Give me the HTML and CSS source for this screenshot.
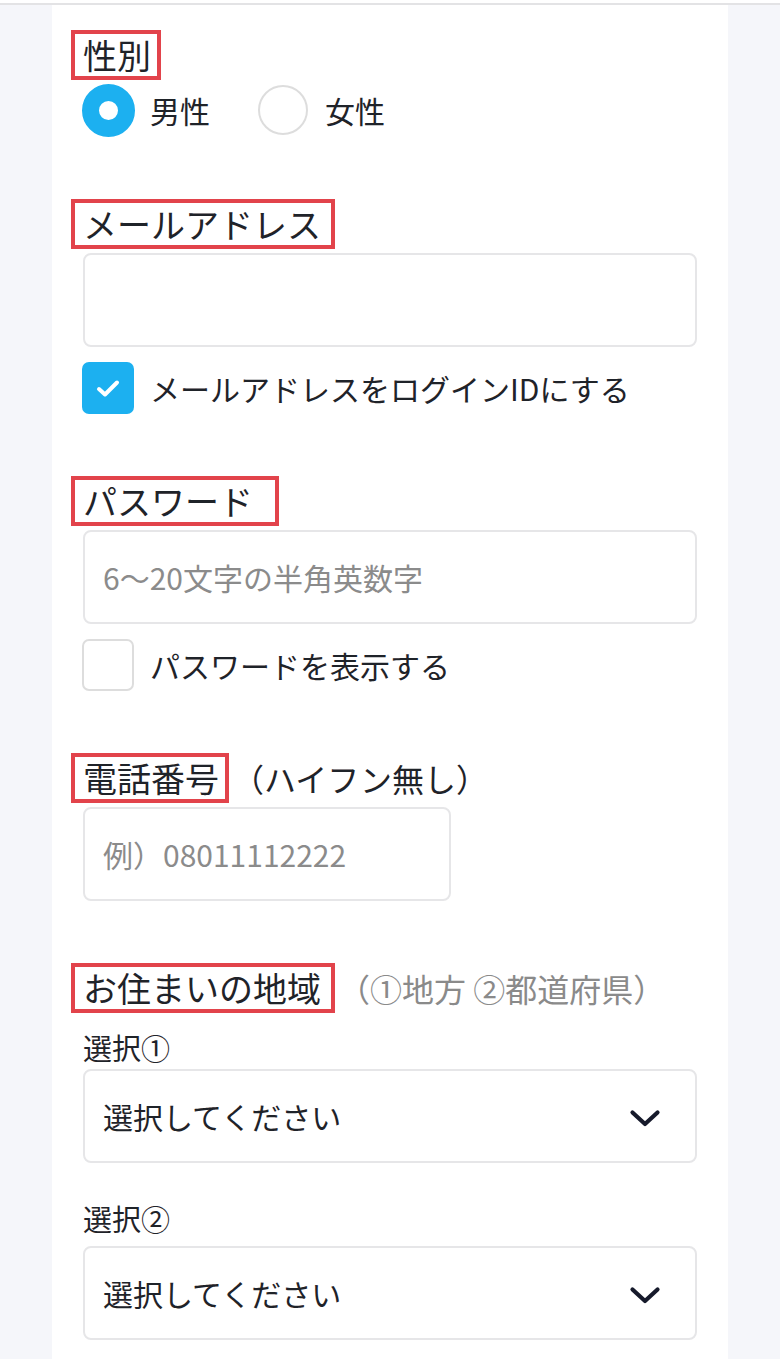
FILE: index.html
```html
<!DOCTYPE html>
<html lang="ja">
<head>
    <meta charset="UTF-8">
    <meta name="viewport" content="width=device-width, initial-scale=1.0">
    <title>会員登録</title>
    <link rel="stylesheet" href="styles.css">
</head>
<body>
    <div class="topbar"></div>
    <main class="panel">
        <section class="field field-gender">
            <div class="field-label"><span class="mark">性別</span></div>
            <div class="radio-group">
                <label class="radio">
                    <span class="radio-dot checked"></span>
                    <span>男性</span>
                </label>
                <label class="radio">
                    <span class="radio-dot"></span>
                    <span>女性</span>
                </label>
            </div>
        </section>

        <section class="field field-email">
            <div class="field-label"><span class="mark mark-wide">メールアドレス</span></div>
            <input type="text" class="text-input" value="">
            <label class="check">
                <span class="check-box checked">
                    <svg width="24" height="19" viewBox="0 0 24 19">
                        <path d="M3 10 L9 15.5 L21 3.5" fill="none" stroke="#fff" stroke-width="4" stroke-linecap="round" stroke-linejoin="round"/>
                    </svg>
                </span>
                <span>メールアドレスをログインIDにする</span>
            </label>
        </section>

        <section class="field">
            <div class="field-label"><span class="mark mark-password">パスワード</span></div>
            <input type="text" class="text-input" placeholder="6〜20文字の半角英数字">
            <label class="check">
                <span class="check-box"></span>
                <span>パスワードを表示する</span>
            </label>
        </section>

        <section class="field">
            <div class="field-label">
                <span class="mark">電話番号</span>
                <span class="label-note">（ハイフン無し）</span>
            </div>
            <input type="text" class="text-input text-input-short" placeholder="例）08011112222">
        </section>

        <section class="field">
            <div class="field-label">
                <span class="mark mark-wide">お住まいの地域</span>
                <span class="label-note muted">（①地方 ②都道府県）</span>
            </div>
            <div class="sub-label">選択①</div>
            <div class="select">
                <span>選択してください</span>
                <svg class="chevron" width="32" height="19" viewBox="0 0 32 19">
                    <path d="M3.5 3.5 L16 15 L28.5 3.5" fill="none" stroke="#161a2b" stroke-width="4.2" stroke-linecap="round" stroke-linejoin="round"/>
                </svg>
            </div>
            <div class="sub-label sub-label-second">選択②</div>
            <div class="select select-second">
                <span>選択してください</span>
                <svg class="chevron" width="32" height="19" viewBox="0 0 32 19">
                    <path d="M3.5 3.5 L16 15 L28.5 3.5" fill="none" stroke="#161a2b" stroke-width="4.2" stroke-linecap="round" stroke-linejoin="round"/>
                </svg>
            </div>
        </section>
    </main>
</body>
</html>
```

FILE: styles.css
```css
body {
    font-family: 'Noto Sans CJK JP', 'Noto Sans', sans-serif;
    margin: 0;
    padding: 0;
    background-color: #f5f6fa;
    color: #1f2329;
}

.topbar {
    height: 3px;
    background: #fff;
    border-bottom: 2px solid #e3e3e5;
}

.panel {
    margin: 0 52px;
    padding: 25px 31px 40px;
    background: #fff;
    min-height: 1400px;
    box-sizing: border-box;
}

.field {
    margin-top: 62px;
}

.field-gender {
    margin-top: 0;
}

.field-email {
    margin-top: 63px;
}

.field-label {
    display: flex;
    align-items: center;
    height: 50px;
    font-size: 34px;
}

.mark {
    display: inline-block;
    border: 4px solid #e2434b;
    height: 42px;
    line-height: 42px;
    padding: 0 6px 0 8px;
    margin-left: -12px;
}

.mark-wide {
    padding-right: 10px;
}

.mark-password {
    padding-right: 22px;
}

.label-note {
    margin-left: 3px;
    font-size: 32px;
}

.label-note.muted {
    color: #8a8a8a;
}

.radio-group {
    display: flex;
    align-items: center;
    height: 52px;
    margin-top: 4px;
    font-size: 30px;
}

.radio {
    display: flex;
    align-items: center;
    margin-right: 48px;
}

.radio-dot {
    width: 50px;
    height: 50px;
    box-sizing: border-box;
    border: 2px solid #dddddd;
    border-radius: 50%;
    margin-right: 17px;
}

.radio-dot.checked {
    width: 53px;
    height: 53px;
    margin-left: -1px;
    margin-right: 15px;
    border: 17.5px solid #1cb0f0;
    background: #fff;
}

.text-input {
    display: block;
    width: 100%;
    height: 94px;
    box-sizing: border-box;
    margin: 4px 0 0;
    padding: 0 18px;
    border: 2px solid #e6e6e8;
    border-radius: 8px;
    font-family: inherit;
    font-size: 30px;
    color: #1f2329;
    background: #fff;
    outline: none;
}

.text-input::placeholder {
    color: #8b8b8b;
}

.text-input-short {
    width: 368px;
}

.check {
    display: flex;
    align-items: center;
    height: 52px;
    margin-top: 15px;
    font-size: 30px;
}

.check-box {
    width: 52px;
    height: 52px;
    box-sizing: border-box;
    border: 2px solid #dddddd;
    border-radius: 7px;
    margin-left: -1px;
    margin-right: 16px;
    display: flex;
    align-items: center;
    justify-content: center;
}

.check-box.checked {
    border: none;
    background: #1cb0f0;
}

.sub-label {
    font-size: 29px;
    height: 40px;
    line-height: 40px;
    margin-top: 14px;
}

.sub-label-second {
    margin-top: 35px;
}

.select {
    display: flex;
    align-items: center;
    justify-content: space-between;
    height: 94px;
    box-sizing: border-box;
    margin-top: 2px;
    padding: 0 34px 0 18px;
    border: 2px solid #e6e6e8;
    border-radius: 8px;
    font-size: 30px;
}

.select-second {
    margin-top: 8px;
}

.chevron {
    margin-top: 4px;
}
```
